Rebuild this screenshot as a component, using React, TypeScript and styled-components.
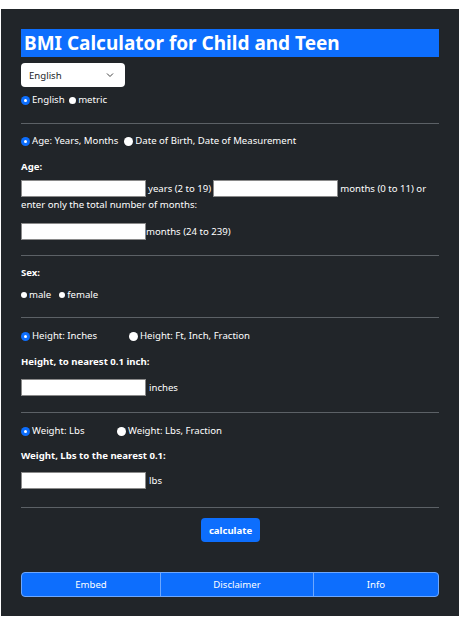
import React from "react";
import styled, { createGlobalStyle } from "styled-components";

const Global = createGlobalStyle`
  html, body { margin: 0; padding: 0; background: #ffffff; }
  body { font-family: "Noto Sans", "Open Sans", Arial, sans-serif; }
  * { box-sizing: border-box; }
`;

const Panel = styled.div`
  margin: 9px 0 0 1px;
  width: 458px;
  height: 607px;
  background: #212529;
  padding: 20px 20px 0 20px;
  color: #ffffff;
  font-size: 9.6px;
`;

const Title = styled.h1`
  margin: 0;
  height: 28px;
  background: #0d6efd;
  color: #fff;
  font-size: 19px;
  font-weight: 700;
  line-height: 29px;
  padding-left: 3px;
  white-space: nowrap;
`;

const Select = styled.div`
  margin-top: 6px;
  width: 104px;
  height: 24px;
  background: #fff;
  border-radius: 4px;
  color: #212529;
  display: flex;
  align-items: center;
  justify-content: space-between;
  padding: 0 11px 0 8px;
  font-size: 9.6px;
`;

const Row = styled.div<{ $mt?: number; $gap?: number }>`
  display: flex;
  align-items: center;
  margin-top: ${(p) => p.$mt ?? 0}px;
  gap: ${(p) => p.$gap ?? 0}px;
  line-height: 14px;
  white-space: nowrap;
`;

const Option = styled.label<{ $w?: number }>`
  display: flex;
  align-items: center;
  gap: 2px;
  ${(p) => (p.$w ? `width: ${p.$w}px;` : "")}
`;

const Radio = styled.span<{ $on?: boolean; $size?: number }>`
  width: ${(p) => p.$size ?? 9}px;
  height: ${(p) => p.$size ?? 9}px;
  border-radius: 50%;
  flex: none;
  background: ${(p) => (p.$on ? "#0d6efd" : "#ffffff")};
  position: relative;
  &::after {
    content: "";
    display: ${(p) => (p.$on ? "block" : "none")};
    position: absolute;
    left: 50%;
    top: 50%;
    width: 3px;
    height: 3px;
    margin: -1.5px 0 0 -1.5px;
    border-radius: 50%;
    background: #fff;
  }
`;

const Divider = styled.hr<{ $mt: number }>`
  margin: ${(p) => p.$mt}px 0 0 0;
  border: 0;
  border-top: 1px solid #5c6166;
  height: 0;
`;

const Label = styled.div<{ $mt: number }>`
  margin-top: ${(p) => p.$mt}px;
  font-weight: 700;
  line-height: 14px;
`;

const Input = styled.div`
  width: 125px;
  height: 17px;
  background: #fff;
  border: 1px solid #8a8a8a;
  flex: none;
`;

const Text = styled.span<{ $ml?: number }>`
  margin-left: ${(p) => p.$ml ?? 0}px;
`;

const Para = styled.div<{ $mt: number }>`
  margin-top: ${(p) => p.$mt}px;
  line-height: 14px;
`;

const Center = styled.div`
  display: flex;
  justify-content: center;
  margin-top: 10px;
`;

const CalcButton = styled.button`
  background: #0d6efd;
  color: #fff;
  border: 0;
  border-radius: 4px;
  height: 24px;
  padding: 0 8px;
  font-family: inherit;
  font-size: 9.6px;
  font-weight: 700;
  margin-left: 1px;
`;

const Group = styled.div`
  margin-top: 30px;
  display: flex;
  height: 25px;
  border: 1px solid #6ea8fe;
  border-radius: 4px;
  overflow: hidden;
  background: #0d6efd;
`;

const GroupBtn = styled.div<{ $w: number; $last?: boolean }>`
  width: ${(p) => p.$w}px;
  flex: ${(p) => (p.$last ? "1" : "none")};
  display: flex;
  align-items: center;
  justify-content: center;
  color: #fff;
  font-size: 9.6px;
  border-right: ${(p) => (p.$last ? "0" : "1px solid #6ea8fe")};
`;

const Chevron = () => (
  <svg width="8" height="6" viewBox="0 0 8 6" fill="none">
    <path d="M1 1.5 L4 4.5 L7 1.5" stroke="#444" strokeWidth="1" />
  </svg>
);

export default function App() {
  return (
    <>
      <Global />
      <Panel>
        <Title>BMI Calculator for Child and Teen</Title>
        <Select>
          <span>English</span>
          <Chevron />
        </Select>
        <Row $mt={6}>
          <Option><Radio $on /> English</Option>
          <Option>&nbsp;<Radio $size={7} /> metric</Option>
        </Row>
        <Divider $mt={16} />
        <Row $mt={10} $gap={6}>
          <Option><Radio $on /> Age: Years, Months</Option>
          <Option><Radio /> Date of Birth, Date of Measurement</Option>
        </Row>
        <Label $mt={12}>Age:</Label>
        <Row $mt={6}>
          <Input />
          <Text $ml={2}>years (2 to 19)</Text>
          <Text $ml={2}><Input /></Text>
          <Text $ml={2}>months (0 to 11) or</Text>
        </Row>
        <Para $mt={1}>enter only the total number of months:</Para>
        <Row $mt={11}>
          <Input />
          <Text>months (24 to 239)</Text>
        </Row>
        <Divider $mt={15} />
        <Label $mt={10}>Sex:</Label>
        <Row $mt={8} $gap={8}>
          <Option><Radio $size={6} />male</Option>
          <Option><Radio $size={6} />female</Option>
        </Row>
        <Divider $mt={15} />
        <Row $mt={11}>
          <Option $w={108}><Radio $on /> Height: Inches</Option>
          <Option><Radio /> Height: Ft, Inch, Fraction</Option>
        </Row>
        <Label $mt={12}>Height, to nearest 0.1 inch:</Label>
        <Row $mt={10}>
          <Input />
          <Text $ml={3}>inches</Text>
        </Row>
        <Divider $mt={16} />
        <Row $mt={11}>
          <Option $w={96}><Radio $on /> Weight: Lbs</Option>
          <Option><Radio /> Weight: Lbs, Fraction</Option>
        </Row>
        <Label $mt={11}>Weight, Lbs to the nearest 0.1:</Label>
        <Row $mt={9}>
          <Input />
          <Text $ml={3}>lbs</Text>
        </Row>
        <Divider $mt={18} />
        <Center>
          <CalcButton>calculate</CalcButton>
        </Center>
        <Group>
          <GroupBtn $w={139}>Embed</GroupBtn>
          <GroupBtn $w={153}>Disclaimer</GroupBtn>
          <GroupBtn $w={126} $last>Info</GroupBtn>
        </Group>
      </Panel>
    </>
  );
}
